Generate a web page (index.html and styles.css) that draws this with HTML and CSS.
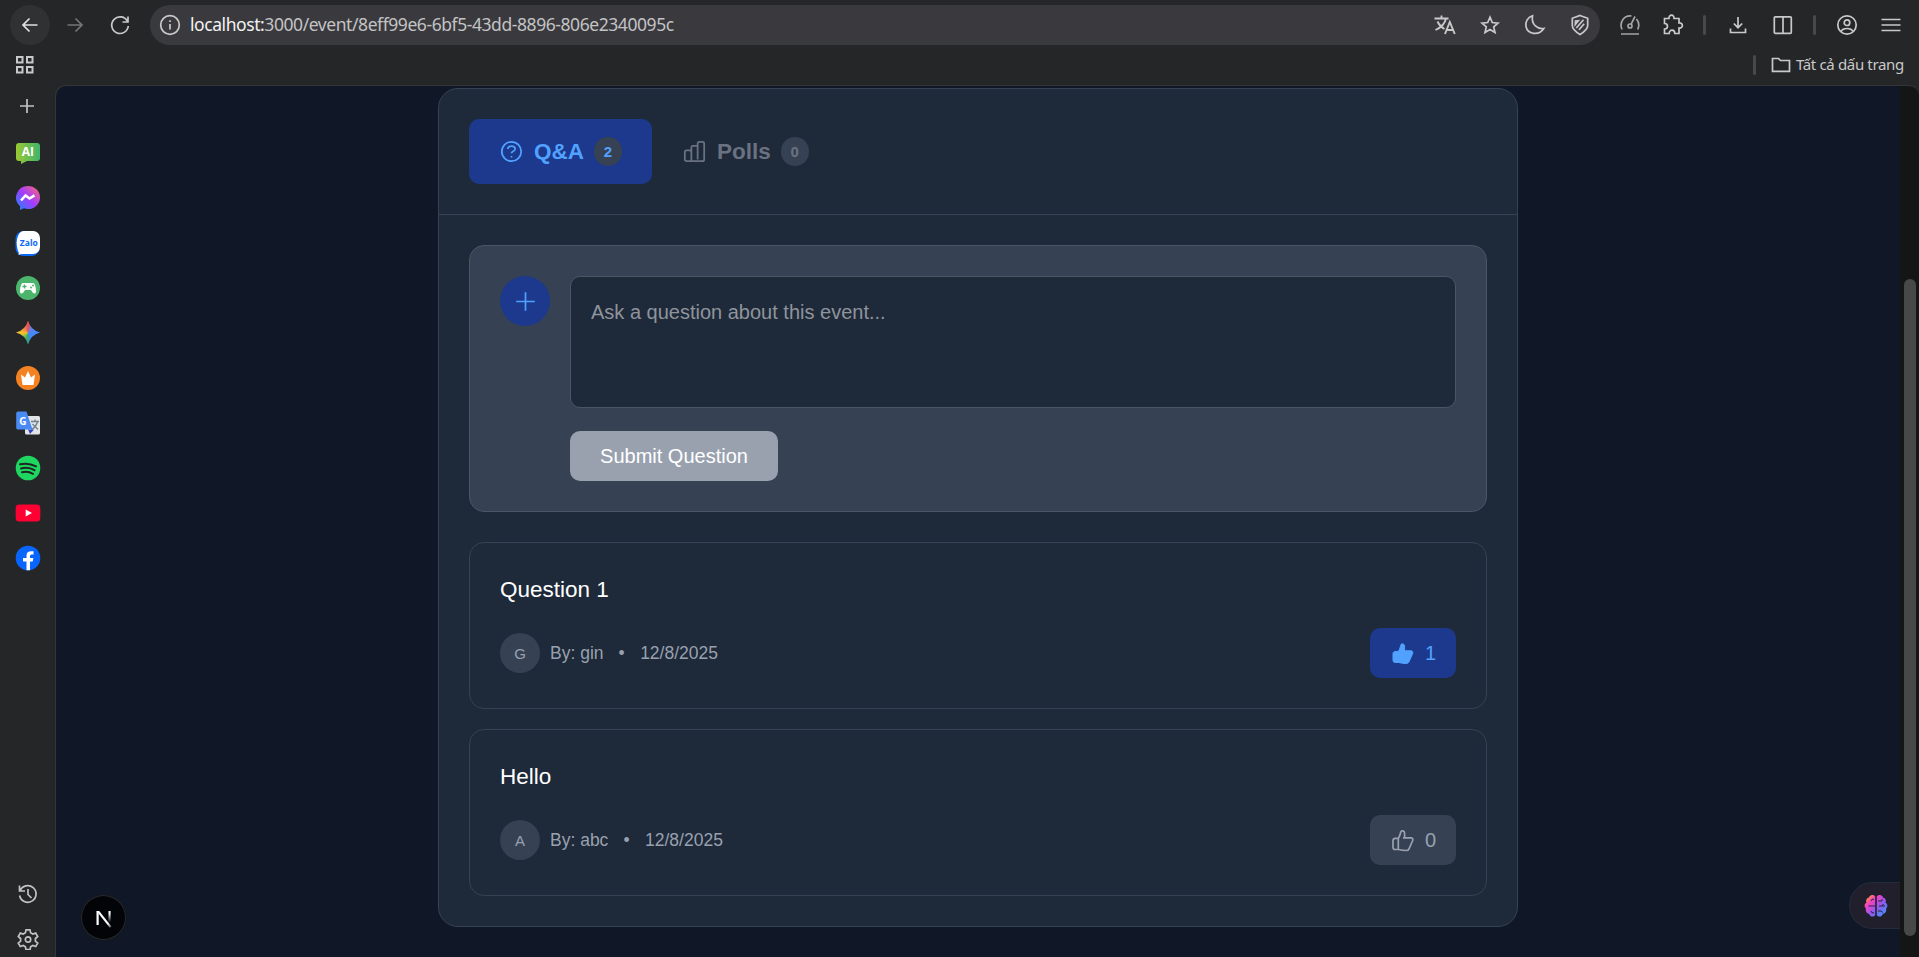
FILE: index.html
```
<!DOCTYPE html>
<html lang="vi">
<head>
<meta charset="utf-8">
<title>Event Q&amp;A</title>
<link rel="stylesheet" href="styles.css">
</head>
<body>
<div class="browser">
  <header class="chrome">
    <div class="toolbar">
      <div class="slot back"><svg width="20" height="20" viewBox="0 0 20 20"><path d="M17.5 10H3.500M9.500 3.500L3 10l6.500 6.500"/></svg></div>
      <div class="slot dim"><svg width="20" height="20" viewBox="0 0 20 20"><path d="M2.500 10h14M10.500 3.500L17 10l-6.500 6.500"/></svg></div>
      <div class="slot"><svg width="22" height="22" viewBox="0 0 22 22"><path d="M18.500 7.500A8.300 8.300 0 1 0 19.300 12M19 2.500v5.500h-5.500"/></svg></div>
      <div class="urlbar">
        <div class="slot"><svg width="22" height="22" viewBox="0 0 22 22"><circle cx="11" cy="11" r="9.300"/><path d="M11 10v5.500M11 6.300v1.600"/></svg></div>
        <span class="url"><b>localhost:</b>3000/event/8eff99e6-6bf5-43dd-8896-806e2340095c</span>
        <div class="slot"><svg width="22" height="20" viewBox="0 0 22 20"><path d="M.5 3.500h14M7.500 .5v3M12 3.500C11 8 7 12.500 1.500 15M3.500 6.500c2 4 4 6 7 7.500M11 19l4.800-12L20.800 19M12.700 15h6.400" stroke-width="1.900"/></svg></div>
        <div class="slot"><svg width="20" height="20" viewBox="0 0 20 20"><path d="M10 2.200l2.300 5.300 5.700.6-4.300 3.800 1.300 5.700-5-3-5 3 1.300-5.700L2 8.100l5.700-.6z"/></svg></div>
        <div class="slot"><svg width="22" height="22" viewBox="0 0 22 22"><path d="M8.500 1.800C3.500 3.500 1 8 2 12.500c1.500 7.500 12.500 10 17.800 2C14 15.500 7 11 8.500 1.800z"/></svg></div>
        <div class="slot"><svg width="20" height="22" viewBox="0 0 20 22"><path d="M10 1.500l7.700 2.800v7.200c0 4-3.700 6.500-7.700 9-4-2.500-7.700-5-7.700-9V4.300z"/><path d="M5.300 10.500l3-3.700-2.800.2zM6.300 14l7.200-8.200M9 15.800l5.200-6" stroke-width="1.700"/></svg></div>
      </div>
      <div class="slot gauge"><svg width="22" height="22" viewBox="0 0 22 22"><path d="M3 15.500C-.2 8 5.500 1 12.500 2M17.500 5c2.500 3 2.800 7 1.200 10.500M2 20h18M16 2.500l-4 7.800"/><circle cx="11" cy="12" r="2"/></svg></div>
      <div class="slot puzzle"><svg width="22" height="22" viewBox="0 0 22 22"><path d="M2.500 4.500H7C6.500 0 12.500 0 12 4.500h5V9c4.500-.5 4.500 5.500 0 5v5.500h-4.200c0-4.500-5.600-4.500-5.600 0H2.500V15c4-.3 4-5.500 0-5.500z"/></svg></div>
      <i class="sep s1"></i>
      <div class="slot dl"><svg width="20" height="20" viewBox="0 0 20 20"><path d="M10 2v10.500M5.800 8.500L10 12.700l4.200-4.200M2.500 13.500v4h15v-4"/></svg></div>
      <div class="slot"><svg width="20" height="20" viewBox="0 0 20 20"><rect x="1.300" y="1.800" width="17" height="16.500" rx="1"/><path d="M10 2v16"/></svg></div>
      <i class="sep s2"></i>
      <div class="slot profile"><svg width="22" height="22" viewBox="0 0 22 22"><circle cx="11" cy="11" r="9.200"/><circle cx="11" cy="8.700" r="2.800"/><path d="M5 17.500c2-4 10-4 12 0"/></svg></div>
      <div class="slot"><svg width="20" height="20" viewBox="0 0 20 20"><path d="M.5 4.500h19M.5 10h19M.5 15.500h19"/></svg></div>
    </div>
    <div class="bookmarks">
      <svg class="apps" width="20" height="20" viewBox="0 0 20 20"><path d="M2 2h5.500v5.500H2zM12 2h5.500v5.500H12zM2 12h5.500v5.500H2zM12 12h5.500v5.500H12z"/></svg>
      <i class="sep"></i>
      <svg class="folder" width="20" height="18" viewBox="0 0 20 18"><path d="M1.500 2.500h6l2 2h9v10.800h-17z"/></svg>
      <span class="all">Tất cả dấu trang</span>
    </div>
  </header>
  <div class="body">
    <aside class="side">
      <div class="app add"><svg width="16" height="16" viewBox="0 0 16 16"><path d="M8 1v14M1 8h14"/></svg></div>
      <div class="app"><svg class="f" width="26" height="26" viewBox="0 0 26 26"><defs><linearGradient id="ai"><stop stop-color="#9bc832"/><stop offset="1" stop-color="#3fb56b"/></linearGradient></defs><path fill="url(#ai)" d="M4 3h18a3 3 0 0 1 3 3v12a3 3 0 0 1-3 3H12l-6 3v-3H4a3 3 0 0 1-3-3V6a3 3 0 0 1 3-3z"/><text x="12.800" y="16" class="ai">AI</text></svg></div>
      <div class="app"><svg class="f" width="26" height="26" viewBox="0 0 26 26"><defs><linearGradient id="ms" x1="0" y1="1" x2="1" y2="0"><stop stop-color="#1688ff"/><stop offset=".5" stop-color="#a33cff"/><stop offset="1" stop-color="#ff6a70"/></linearGradient></defs><path fill="url(#ms)" d="M13 1a12 11.500 0 0 1 0 23q-2 0-4-.7L5 25v-4A12 11.500 0 0 1 13 1z"/><path d="M6 15.500l4.500-5 4 3 5-3.200" fill="none" stroke="#fff" stroke-width="2.600"/></svg></div>
      <div class="app"><svg class="f" width="26" height="26" viewBox="0 0 26 26"><rect x=".5" y="1" width="24" height="25" rx="8" fill="#0868f7"/><path fill="#fff" d="M9 1h9a7 7 0 0 1 7 7v9a7 7 0 0 1-7 7H8q-3 0-4.500 1 1-2-.8-5Q.5 12 3 6q2-5 6-5z"/><text x="13.800" y="16" class="zalo">Zalo</text></svg></div>
      <div class="app"><svg class="f" width="26" height="26" viewBox="0 0 26 26"><circle cx="13" cy="13" r="12" fill="#4bb56c"/><path fill="#fff" d="M8 8h10q2 0 2.800 5.500.8 5-1.300 5-1.500 0-3.500-3.500h-6q-2 3.500-3.500 3.500-2.100 0-1.300-5Q6 8 8 8z"/><path d="M9.500 9.500v4M7.500 11.500h4" stroke="#4bb56c" stroke-width="1.300"/><circle cx="16" cy="12.500" r="1" fill="#4bb56c"/><circle cx="18" cy="10.500" r="1" fill="#4bb56c"/></svg></div>
      <div class="app"><div class="gemini"></div></div>
      <div class="app"><svg class="f" width="26" height="26" viewBox="0 0 26 26"><circle cx="13" cy="13" r="12" fill="#f58220"/><path fill="#fff" d="M7.500 20L6 9.500l4 3L13 6l3 6.500 4-3L18.500 20z"/></svg></div>
      <div class="app"><svg class="f" width="26" height="26" viewBox="0 0 26 26"><rect x="10" y="6" width="15" height="18.500" rx="1.500" fill="#e2e4e6"/><path d="M16 11.500h8M20 9.500v2M22.500 11.500q-1 5-6 8M17.500 14l5.500 5.500" fill="none" stroke="#6d8191" stroke-width="1.300"/><path fill="#3844bd" d="M13 19.500h6l-4 4.500z"/><path fill="#4a8af4" d="M3 1.500h8.500l6 18H3A1.800 1.800 0 0 1 1.200 18V3A1.800 1.800 0 0 1 3 1.500z"/><text x="7.800" y="14.500" class="gt">G</text></svg></div>
      <div class="app"><svg class="f" width="26" height="26" viewBox="0 0 26 26"><circle cx="13" cy="13" r="12.300" fill="#1ed760"/><path d="M5 9.300q8.500-2 16 2M6 13.500q7.500-2 13.500 1.700M7 17.300q6-1.500 11 1.500" fill="none" stroke="#202422" stroke-width="2" stroke-linecap="round"/></svg></div>
      <div class="app"><svg class="f" width="26" height="26" viewBox="0 0 26 26"><rect x=".7" y="4.500" width="24.600" height="17" rx="3.500" fill="#ff0033"/><path fill="#fff" d="M10.700 9.500l6.300 3.500-6.300 3.500z"/></svg></div>
      <div class="app"><svg class="f" width="26" height="26" viewBox="0 0 26 26"><circle cx="13" cy="13" r="12.300" fill="#0866ff"/><path fill="#fff" d="M11.500 25.200v-8.700H8V13h3.500v-2.300c0-3.800 2.200-5 7-4.400v3.200c-2.700-.2-3.500.2-3.500 1.800V13h3.400l-.7 3.500H15v8.700z"/></svg></div>
      <span class="grow"></span>
      <div class="app"><svg width="22" height="22" viewBox="0 0 22 22"><path d="M3 8a8.300 8.300 0 1 1-.4 4.500M2.500 2.500V8H8M11 6v5.500l3.500 3.500"/></svg></div>
      <div class="app"><svg width="22" height="22" viewBox="0 0 22 22"><path d="M9 1.800h4l.6 3 2.200 1.300 2.900-1 2 3.400-2.300 2v2.600l2.300 2-2 3.400-2.900-1-2.200 1.300-.6 2.800H9l-.6-2.800-2.200-1.300-2.900 1-2-3.400 2.300-2v-2.600l-2.300-2 2-3.400 2.900 1L8.400 4.800z"/><circle cx="11" cy="11.500" r="2.700"/></svg></div>
    </aside>
    <main class="page">
      <section class="panel">
        <nav class="tabs">
          <button class="tab on"><svg width="25" height="25" viewBox="0 0 24 24"><circle cx="12" cy="12" r="9.300"/><path d="M8.500 9.600c0-3.800 7-3.600 7 .1 0 2.300-3.500 1.700-3.500 4M12 16.200v1.500"/></svg><span>Q&amp;A</span><em>2</em></button>
          <button class="tab"><svg width="25" height="25" viewBox="0 0 24 24"><path d="M9 21.300H4.300a1.600 1.600 0 0 1-1.600-1.600v-7.200a1.600 1.600 0 0 1 1.600-1.600h3.100A1.600 1.600 0 0 1 9 12.500zM9 19.700V8.200a1.600 1.600 0 0 1 1.600-1.600H15M9 21.300h6M15 19.700V4.500a1.700 1.700 0 0 1 1.700-1.700h2.900a1.700 1.700 0 0 1 1.700 1.700v15.100a1.700 1.700 0 0 1-1.700 1.700h-4.600"/></svg><span>Polls</span><em>0</em></button>
        </nav>
        <div class="content">
          <form class="ask">
            <div class="plus"><svg width="25" height="25" viewBox="0 0 25 25"><path d="M12.500 3.200v18.600M3.200 12.500h18.600"/></svg></div>
            <div class="fields">
              <div class="textarea">Ask a question about this event...</div>
              <button class="submit" type="button">Submit Question</button>
            </div>
          </form>
          <div class="list">
            <article class="question">
              <h3>Question 1</h3>
              <div class="meta"><span class="avatar">G</span><span>By: gin</span><span class="dot">•</span><span>12/8/2025</span>
                <button class="vote on" type="button"><svg width="25" height="25" viewBox="0 0 25 25"><path d="M3 12.800c0-1.500.8-2.400 2.300-2.400h3c1.700-2.500 1.900-4.400 2.500-6.400.5-1.800 3.800-1.500 3.800 1.300v4.500h6.400c1.500 0 2.200 1.400 1.700 2.700l-3.700 8.300c-.5 1.100-1.300 1.700-2.600 1.700-2.800 0-5-.3-7.500-1H5.200C3.700 21.500 3 20.500 3 19.200z"/></svg><span>1</span></button>
              </div>
            </article>
            <article class="question">
              <h3>Hello</h3>
              <div class="meta"><span class="avatar">A</span><span>By: abc</span><span class="dot">•</span><span>12/8/2025</span>
                <button class="vote" type="button"><svg width="25" height="25" viewBox="0 0 25 25"><path d="M3 12.800c0-1.500.8-2.400 2.300-2.400h3c1.700-2.500 1.900-4.400 2.500-6.400.5-1.800 3.800-1.500 3.800 1.300v4.500h6.400c1.500 0 2.200 1.400 1.700 2.700l-3.700 8.300c-.5 1.100-1.300 1.700-2.600 1.700-2.800 0-5-.3-7.500-1H5.200C3.700 21.500 3 20.500 3 19.200zM8.300 10.400v11M13 9.800h2"/></svg><span>0</span></button>
              </div>
            </article>
          </div>
        </div>
      </section>
      <div class="next"><svg class="f" width="45" height="45" viewBox="0 0 45 45"><defs><linearGradient id="n1" x1="0" y1="0" x2="0" y2="1"><stop offset=".2" stop-color="#fff"/><stop offset="1" stop-color="#fff" stop-opacity="0"/></linearGradient><linearGradient id="n2" x1="0" y1="0" x2="1" y2="1"><stop offset=".75" stop-color="#fff"/><stop offset="1" stop-color="#fff" stop-opacity=".2"/></linearGradient></defs><path fill="#fff" d="M15.500 16h2.200v14h-2.200z"/><path fill="url(#n2)" d="M15.500 16h2.700l12.300 15.500-1.700 1.300z"/><path fill="url(#n1)" d="M27.500 16h2.100v11.500h-2.100z"/></svg></div>
      <div class="brain"><svg class="f" width="24" height="24" viewBox="0 0 24 24"><defs><linearGradient id="br" x1="0" y1="0" x2="1" y2="1"><stop offset=".08" stop-color="#ff9b35"/><stop offset=".3" stop-color="#f63fc4"/><stop offset=".6" stop-color="#895cf0"/><stop offset="1" stop-color="#28a7ff"/></linearGradient></defs><path fill="url(#br)" d="M11.200 2.500C9-.2 5.500 1 5 3.500 2.500 4 1.500 6.500 2.500 8.500.2 10 0 13 2 14.500c-1 3 1 5 3.200 5.500.8 3 4.500 3.500 6 1zM12.800 2.500C15-.2 18.500 1 19 3.500c2.500.5 3.500 3 2.500 5 2.300 1.500 2.500 4.500.5 6 1 3-1 5-3.200 5.500-.8 3-4.500 3.500-6 1z"/><path d="M11 12H4.500M10 5q-3 0-3 2M7 17q0 2 3 2M14 7h4V5M15 12h6M19.500 10l-1.500 2M14 17h3l2 1.500" fill="none" stroke="#2c2340" stroke-width="1"/></svg></div>
    </main>
    <div class="scroll"><div class="thumb"></div></div>
  </div>
</div>
</body>
</html>
```
FILE: styles.css
```
* { box-sizing: border-box; }
body { margin: 0; height: 957px; overflow: hidden; background: #252628; font-family: "Liberation Sans", Arial, sans-serif; }
svg { display: block; flex: none; fill: none; stroke: currentColor; stroke-width: 1.7; }
svg.f { stroke: none; }
button { border: 0; font: inherit; }
.browser { height: 957px; display: flex; flex-direction: column; }
.chrome { height: 85px; flex: none; color: #c9c9ca; font-family: "Noto Sans", sans-serif; }
.toolbar { height: 50px; display: flex; align-items: center; padding: 0 8px 0 10px; gap: 5px; }
.slot { width: 40px; height: 40px; display: flex; align-items: center; justify-content: center; flex: none; }
.back { background: #303133; border-radius: 50%; color: #e0e0e0; }
.dim { color: #737476; }
.urlbar { width: 1450px; height: 40px; border-radius: 20px; background: #3a3a3e; display: flex; align-items: center; gap: 5px; margin-left: 5px; flex: none; }
.url { flex: 1; margin-left: -5px; padding-bottom: 2px; font-size: 17.5px; letter-spacing: -.43px; color: #c3c3c5; white-space: nowrap; }
.url b { font-weight: 400; color: #f2f2f2; }
.gauge { margin-left: 5px; color: #a4a4a5; }
.puzzle { margin-left: -2px; }
.sep { width: 3px; height: 20px; border-radius: 2px; background: #48494b; flex: none; }
.s1 { margin: 0 7px 0 5px; }
.s2 { margin: 0 6px 0 5px; }
.profile { margin-right: -1px; }
.bookmarks { height: 30px; display: flex; align-items: center; padding: 0 15px; }
.apps { margin-right: auto; stroke-width: 2; }
.folder { margin: 0 5px 0 15px; }
.all { width: 108px; padding-bottom: 2px; font-size: 15px; letter-spacing: -.35px; white-space: nowrap; }
.body { flex: 1; display: flex; min-height: 0; }
.side { width: 55px; flex: none; display: flex; flex-direction: column; color: #c2c2c3; }
.app { height: 45px; display: flex; align-items: center; justify-content: center; flex: none; padding-left: 1px; }
.add { margin-top: -2px; padding-right: 1px; padding-left: 0; }
.add + .app { margin-top: 2px; }
.grow { flex: 1; }
.side { margin-bottom: -4px; }
.ai, .zalo, .gt { font-family: "Open Sans", sans-serif; font-weight: 700; text-anchor: middle; }
.ai { font-size: 12px; fill: #fff; }
.zalo { font-size: 8.5px; fill: #0868f7; }
.gt { font-size: 10px; fill: #fff; }
.gemini { width: 24px; height: 24px; background: conic-gradient(#ea4f4f, #6a7ee8 30deg, #4288fb 90deg, #4288fb 150deg, #35a86b 190deg, #8bc04a 230deg, #f9c32b 270deg, #ef8a4a 320deg, #ea4f4f); clip-path: path("M12 0Q14.500 9.500 24 12Q14.500 14.500 12 24Q9.500 14.500 0 12Q9.500 9.500 12 0Z"); }
.page { position: relative; flex: 1; background: #101828; border: 1px solid #343538; border-width: 1px 0 0 1px; border-top-left-radius: 11px; padding: 2px 0 0 382px; }
.scroll { width: 19px; flex: none; background: #141616; border-top: 1px solid #343538; border-top-right-radius: 10px; padding: 193px 3px 0 4px; }
.thumb { height: 657px; border-radius: 6px; background: #474848; }
.panel { width: 1080px; height: 839px; background: #1e2939; border: 1px solid #364153; border-radius: 20px; }
.tabs { height: 126px; padding: 30px; display: flex; gap: 0; border-bottom: 1px solid #364153; }
.tab { height: 65px; padding: 0 30px; border-radius: 10px; background: none; color: #6a7282; display: flex; align-items: center; font-size: 22.5px; font-weight: 700; }
.tab.on { width: 183px; background: #1c398e; color: #51a2ff; }
.tab span { margin-left: 10px; }
.tab em { margin-left: 10px; min-width: 28px; height: 29px; border-radius: 15px; background: #364153; font-size: 15px; font-style: normal; line-height: 29px; text-align: center; }
.content { padding: 30px; }
.ask { height: 267px; display: flex; gap: 20px; padding: 30px; background: #364153; border: 1px solid #4a5565; border-radius: 15px; }
.plus { width: 50px; height: 50px; border-radius: 50%; background: #1c398e; color: #51a2ff; display: flex; align-items: center; justify-content: center; }
.fields { flex: 1; display: flex; flex-direction: column; align-items: flex-start; gap: 23px; }
.textarea { width: 100%; height: 132px; padding: 20px; border: 1px solid #4a5565; border-radius: 10px; background: #1e2939; color: #8f949c; font-size: 20px; line-height: 30px; }
.submit { width: 208px; height: 50px; border-radius: 10px; background: #99a1af; color: #fff; font-size: 20px; padding: 0; }
.list { display: grid; gap: 20px; padding-top: 30px; }
.question { height: 167px; padding: 30px; border: 1px solid #364153; border-radius: 15px; }
.question h3 { margin: 0; font-size: 22.5px; line-height: 33px; font-weight: 400; color: #fff; }
.meta { display: flex; align-items: center; margin-top: 22px; height: 50px; font-size: 17.5px; color: #99a1af; }
.avatar { width: 40px; height: 40px; margin-right: 10px; border-radius: 50%; background: #364153; display: flex; align-items: center; justify-content: center; font-size: 15px; }
.dot { margin: 0 15.5px 0 15px; }
.vote { margin-left: auto; width: 86px; height: 50px; padding: 0 20px; border-radius: 10px; background: #364153; color: #99a1af; display: flex; align-items: center; gap: 10px; font-size: 20px; }
.vote.on { background: #1c398e; color: #51a2ff; }
.vote.on path { fill: currentColor; stroke-width: 1; }
.next { position: absolute; left: 25px; bottom: 17px; width: 45px; height: 45px; border-radius: 50%; background: #030407; box-shadow: inset 0 0 0 1px #2a2a2a; }
.brain { position: absolute; right: 0; bottom: 28px; width: 51px; height: 47px; padding: 11px 0 0 14px; border-radius: 24px 0 0 24px; background: #201f2b; border: 1px solid #232c3b; border-right: 0; }
```
